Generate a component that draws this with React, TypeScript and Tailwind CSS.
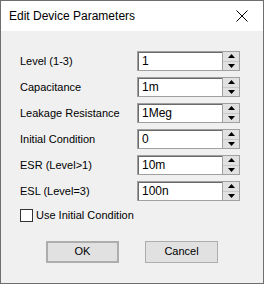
import React from "react";

const FIELDS = [
    { label: "Level (1-3)", value: "1" },
    { label: "Capacitance", value: "1m" },
    { label: "Leakage Resistance", value: "1Meg" },
    { label: "Initial Condition", value: "0" },
    { label: "ESR (Level>1)", value: "10m" },
    { label: "ESL (Level=3)", value: "100n" },
];

function Spinner() {
    return (
        <div className="flex flex-col w-[17px] h-[20px] border border-[#a0a0a0] border-l-0 bg-[#e1e1e1]">
            <div className="flex-1 flex items-center justify-center border-b border-[#c8c8c8]">
                <svg width="7" height="4" viewBox="0 0 7 4">
                    <path d="M0 4 L3.5 0 L7 4 Z" fill="#000" />
                </svg>
            </div>
            <div className="flex-1 flex items-center justify-center">
                <svg width="7" height="4" viewBox="0 0 7 4">
                    <path d="M0 0 L3.5 4 L7 0 Z" fill="#000" />
                </svg>
            </div>
        </div>
    );
}

function Field({ label, value }: { label: string; value: string }) {
    return (
        <div className="flex items-center h-[20px]">
            <div className="w-[117px] text-[11px] text-black">{label}</div>
            <div className="w-[86px] h-[20px] border border-[#a0a0a0] bg-white">
                <div className="h-full border-t border-l border-[#6a6a6a] pl-[3px] text-[12px] leading-[17px] text-black">
                    {value}
                </div>
            </div>
            <Spinner />
        </div>
    );
}

export default function App() {
    return (
        <div
            className="w-[264px] h-[284px] border border-[#6e6e6e] bg-[#f0f0f0] flex flex-col"
            style={{ fontFamily: '"Liberation Sans", Arial, sans-serif' }}
        >
            <div className="h-[30px] bg-white flex items-center justify-between pl-[8px] pr-[15px]">
                <span className="text-[12px] text-black">Edit Device Parameters</span>
                <svg width="12" height="12" viewBox="0 0 12 12">
                    <path d="M0.5 0.5 L11.5 11.5 M11.5 0.5 L0.5 11.5" stroke="#000" strokeWidth="1" />
                </svg>
            </div>
            <div className="flex flex-col gap-[6px] pl-[19px] pt-[20px]">
                {FIELDS.map((f) => (
                    <Field key={f.label} label={f.label} value={f.value} />
                ))}
            </div>
            <label className="flex items-center gap-[3px] pl-[19px] mt-[6px] text-[11px] text-black">
                <span className="w-[13px] h-[13px] border border-[#333] bg-white" />
                Use Initial Condition
            </label>
            <div className="flex gap-[26px] pl-[45px] mt-[17px]">
                <button className="w-[73px] h-[22px] border-2 border-[#adadad] bg-[#e1e1e1] text-[11px] text-black">
                    OK
                </button>
                <button className="w-[73px] h-[22px] border border-[#adadad] bg-[#e1e1e1] text-[11px] text-black">
                    Cancel
                </button>
            </div>
        </div>
    );
}
